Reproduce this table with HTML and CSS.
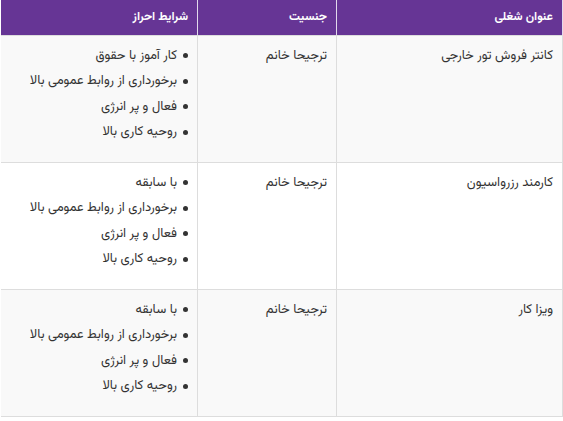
FILE: index.html
```html
<!DOCTYPE html>
<html lang="fa" dir="rtl">
<head>
<meta charset="utf-8">
<title>شرایط شغلی</title>
<link rel="stylesheet" href="styles.css">
</head>
<body>
<table class="jobs">
  <colgroup>
    <col class="c-title">
    <col class="c-gender">
    <col class="c-req">
  </colgroup>
  <thead>
    <tr>
      <th>عنوان شغلی</th>
      <th>جنسیت</th>
      <th>شرایط احراز</th>
    </tr>
  </thead>
  <tbody>
    <tr class="odd">
      <td>کانتر فروش تور خارجی</td>
      <td>ترجیحا خانم</td>
      <td>
        <ul class="reqs">
          <li>کار آموز با حقوق</li>
          <li>برخورداری از روابط عمومی بالا</li>
          <li>فعال و پر انرژی</li>
          <li>روحیه کاری بالا</li>
        </ul>
      </td>
    </tr>
    <tr>
      <td>کارمند رزرواسیون</td>
      <td>ترجیحا خانم</td>
      <td>
        <ul class="reqs">
          <li>با سابقه</li>
          <li>برخورداری از روابط عمومی بالا</li>
          <li>فعال و پر انرژی</li>
          <li>روحیه کاری بالا</li>
        </ul>
      </td>
    </tr>
    <tr class="odd">
      <td>ویزا کار</td>
      <td>ترجیحا خانم</td>
      <td>
        <ul class="reqs">
          <li>با سابقه</li>
          <li>برخورداری از روابط عمومی بالا</li>
          <li>فعال و پر انرژی</li>
          <li>روحیه کاری بالا</li>
        </ul>
      </td>
    </tr>
  </tbody>
</table>
</body>
</html>
```

FILE: styles.css
```css
html, body {
  margin: 0;
  padding: 0;
  background: #ffffff;
}

body {
  font-family: "Vazirmatn", "Noto Sans Arabic", "DejaVu Sans", sans-serif;
  font-size: 13px;
  color: #333333;
}

.jobs {
  border-collapse: collapse;
  table-layout: fixed;
  width: 562px;
}

.c-title { width: 226px; }
.c-gender { width: 139px; }
.c-req { width: 197px; }

.jobs th {
  background: #663595;
  color: #ffffff;
  font-size: 12px;
  font-weight: bold;
  text-align: right;
  height: 35px;
  padding: 0 9px;
  box-sizing: border-box;
  border-left: 1px solid #e2d9ec;
  border-right: 1px solid #e2d9ec;
  border-bottom: 1px solid #dddddd;
  vertical-align: middle;
}

.jobs th:last-child,
.jobs td:last-child {
  border-left: none;
}

.jobs td {
  text-align: right;
  vertical-align: top;
  height: 127px;
  box-sizing: border-box;
  padding: 10px 9px;
  border: 1px solid #dddddd;
  line-height: 20px;
}

.jobs tr.odd td {
  background: #f9f9f9;
}

.reqs {
  list-style: none;
  margin: 0;
  padding: 0;
}

.reqs li {
  display: flex;
  align-items: center;
  gap: 6px;
  height: 20px;
  margin-bottom: 5.5px;
}

.reqs li::before {
  content: "";
  width: 5px;
  height: 5px;
  border-radius: 50%;
  background: #333333;
  flex: none;
}
```
